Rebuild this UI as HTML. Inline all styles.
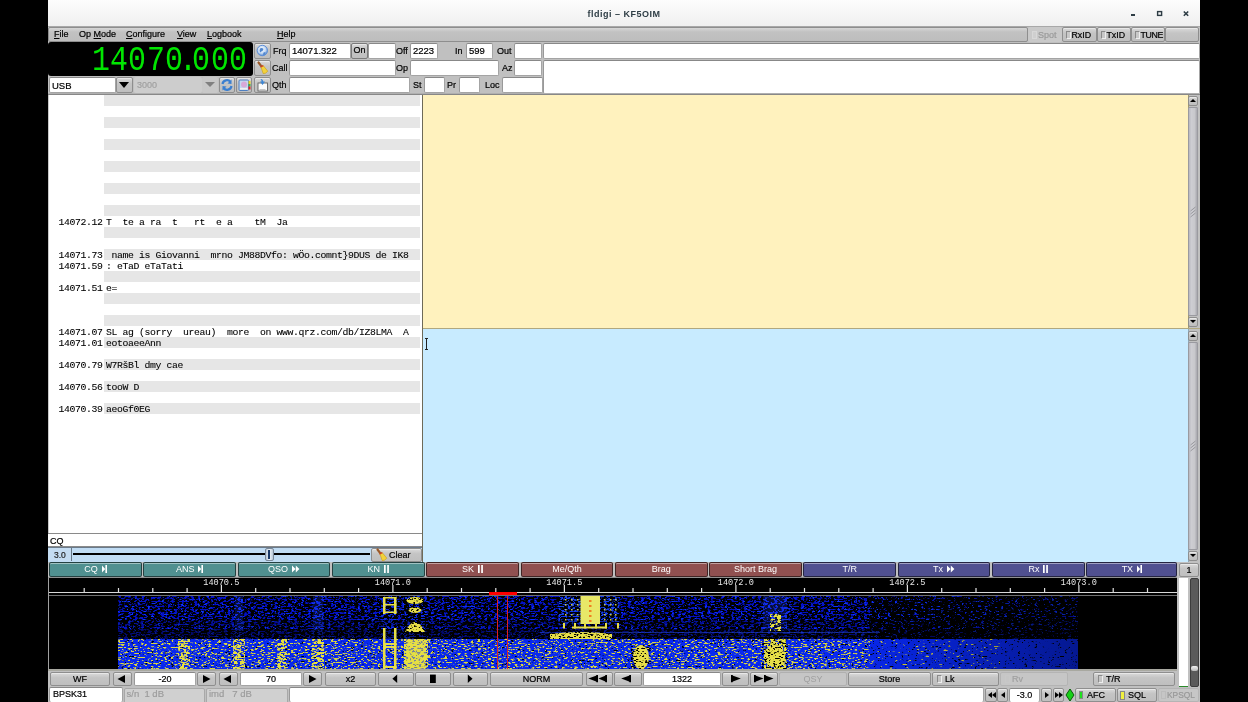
<!DOCTYPE html><html><head><meta charset="utf-8"><style>
*{margin:0;padding:0;box-sizing:border-box}
html,body{width:1248px;height:702px;overflow:hidden;background:#000}
body{will-change:transform;position:relative;font-family:"Liberation Sans",sans-serif;font-size:9px;color:#000}
div{position:absolute}
.btn{border:1px solid #8e8e8e;border-radius:2px;background:linear-gradient(#dadada,#c4c4c4 40%,#bfbfbf);
 box-shadow:inset 0 1px 0 #e8e8e8;text-align:center;white-space:nowrap;line-height:12px;-webkit-text-stroke:0.2px currentColor}
.inp{background:#fff;border:1px solid #a4a4a4;border-top-color:#888;border-left-color:#999;border-radius:2px;white-space:nowrap;line-height:13px;padding-left:2px;-webkit-text-stroke:0.2px currentColor}
.lbl{white-space:nowrap;line-height:10px;-webkit-text-stroke:0.2px currentColor}
.mono{font-family:"Liberation Mono",monospace}
</style></head><body>
<div class="" style="left:48px;top:0px;width:1152px;height:702px;background:#c0c0c0"></div>
<div class="" style="left:48px;top:0px;width:1152px;height:27px;background:linear-gradient(#fdfdfd,#f0f0f0);border-bottom:1px solid #a8a8a8"></div>
<div style="left:48px;top:7.5px;width:1152px;text-align:center;font-size:9px;font-weight:bold;letter-spacing:0.5px;color:#2e3d45;line-height:13px">fldigi – KF5OIM</div>
<svg style="position:absolute;left:1120px;top:0" width="80" height="27"><rect x="11" y="14" width="4" height="2" fill="#2e3d45"/><rect x="37.6" y="11.6" width="4" height="3.8" fill="none" stroke="#2e3d45" stroke-width="1.4"/><path d="M63.8 11.5 L68.2 15.8 M68.2 11.5 L63.8 15.8" stroke="#2e3d45" stroke-width="1.6"/></svg>
<div class="" style="left:48px;top:27px;width:980px;height:15px;background:linear-gradient(#d6d6d6,#c2c2c2 30%,#bdbdbd);border:1px solid #8e8e8e;border-radius:2px"></div>
<div class="lbl" style="left:54px;top:29px;line-height:10px"><u>F</u>ile</div>
<div class="lbl" style="left:79px;top:29px;line-height:10px">Op <u>M</u>ode</div>
<div class="lbl" style="left:126px;top:29px;line-height:10px"><u>C</u>onfigure</div>
<div class="lbl" style="left:177px;top:29px;line-height:10px"><u>V</u>iew</div>
<div class="lbl" style="left:207px;top:29px;line-height:10px"><u>L</u>ogbook</div>
<div class="lbl" style="left:277px;top:29px;line-height:10px"><u>H</u>elp</div>
<div class="" style="left:1028px;top:27px;width:34px;height:15px;background:#c9c9c9;border-radius:2px"></div>
<div style="left:1032px;top:31px;width:5px;height:8px;border:1px solid #d8d8d8;background:#cfcfcf"></div>
<div class="lbl" style="left:1038px;top:29.5px;color:#9a9a9a;font-size:9px">Spot</div>
<div class="btn" style="left:1062px;top:27px;width:35px;height:15px;border-color:#8e8e8e"></div>
<div style="left:1066px;top:31px;width:5px;height:8px;border:1px solid #8a8a8a;border-right-color:#eee;border-bottom-color:#eee;background:#c8c8c8"></div>
<div class="lbl" style="left:1071.5px;top:29.5px;font-size:8.8px">RxID</div>
<div class="btn" style="left:1097px;top:27px;width:34px;height:15px;border-color:#8e8e8e"></div>
<div style="left:1101px;top:31px;width:5px;height:8px;border:1px solid #8a8a8a;border-right-color:#eee;border-bottom-color:#eee;background:#c8c8c8"></div>
<div class="lbl" style="left:1106.5px;top:29.5px;font-size:8.8px">TxID</div>
<div class="btn" style="left:1131px;top:27px;width:34px;height:15px;border-color:#8e8e8e"></div>
<div style="left:1135px;top:31px;width:5px;height:8px;border:1px solid #8a8a8a;border-right-color:#eee;border-bottom-color:#eee;background:#c8c8c8"></div>
<div class="lbl" style="left:1140.5px;top:29.5px;font-size:8.8px;letter-spacing:-0.4px">TUNE</div>
<div class="btn" style="left:1165px;top:27px;width:34px;height:15px;"></div>
<div class="" style="left:48px;top:42px;width:205px;height:34px;background:#000;border-radius:3px"></div>
<div class="mono" style="left:85.5px;top:41px;width:30px;text-align:center;font-size:35.6px;line-height:40px;color:#00e600;transform:scaleX(0.84)">1</div>
<div class="mono" style="left:104.0px;top:41px;width:30px;text-align:center;font-size:35.6px;line-height:40px;color:#00e600;transform:scaleX(0.84)">4</div>
<div class="mono" style="left:122.3px;top:41px;width:30px;text-align:center;font-size:35.6px;line-height:40px;color:#00e600;transform:scaleX(0.84)">0</div>
<div class="mono" style="left:140.6px;top:41px;width:30px;text-align:center;font-size:35.6px;line-height:40px;color:#00e600;transform:scaleX(0.84)">7</div>
<div class="mono" style="left:159.0px;top:41px;width:30px;text-align:center;font-size:35.6px;line-height:40px;color:#00e600;transform:scaleX(0.84)">0</div>
<div class="mono" style="left:172.5px;top:41px;width:30px;text-align:center;font-size:35.6px;line-height:40px;color:#00e600;transform:scaleX(0.84)">.</div>
<div class="mono" style="left:186.4px;top:41px;width:30px;text-align:center;font-size:35.6px;line-height:40px;color:#00e600;transform:scaleX(0.84)">0</div>
<div class="mono" style="left:204.9px;top:41px;width:30px;text-align:center;font-size:35.6px;line-height:40px;color:#00e600;transform:scaleX(0.84)">0</div>
<div class="mono" style="left:223.4px;top:41px;width:30px;text-align:center;font-size:35.6px;line-height:40px;color:#00e600;transform:scaleX(0.84)">0</div>
<div class="btn" style="left:254px;top:43px;width:17px;height:16px;"></div>
<div class="btn" style="left:254px;top:60px;width:17px;height:16px;"></div>
<div class="btn" style="left:254px;top:77px;width:17px;height:16px;"></div>
<svg style="position:absolute;left:254px;top:43px" width="17" height="16"><defs><radialGradient id="gg" cx="0.45" cy="0.4" r="0.6"><stop offset="0" stop-color="#ffffff"/><stop offset="0.6" stop-color="#c8dcf4"/><stop offset="1" stop-color="#5a8ad0"/></radialGradient></defs><circle cx="8.3" cy="7.5" r="5.2" fill="url(#gg)" stroke="#5d8fd8" stroke-width="1"/><path d="M6 5.5 Q8 4.5 9.5 6 L8.5 8 Q7 8 6.5 9.5 Q5 8 6 5.5Z M9.5 9.5 L11.5 9 L11 11.5 L9 12Z" fill="#4f86d0"/></svg>
<svg style="position:absolute;left:254px;top:60px" width="17" height="16"><path d="M4.5 2.5 L7.8 6.8" stroke="#9a5a2a" stroke-width="2.2" stroke-linecap="round"/><path d="M6.8 6.6 L9.2 5.6 L13.8 11.2 Q11.5 14 9.2 13.6 Z" fill="#f2d23c" stroke="#c89c10" stroke-width="0.6"/><path d="M6.5 7 L9.3 5.7" stroke="#d03a2a" stroke-width="1.3"/></svg>
<svg style="position:absolute;left:254px;top:77px" width="17" height="16"><rect x="4" y="6" width="9.5" height="8" fill="#fafafa" stroke="#606060" stroke-width="0.9"/><path d="M6.5 2 Q9 1.5 9.3 4.5 L11 4.5 L8.5 8 L6 4.5 L7.6 4.5 Q7.5 3 6.5 2Z" fill="#3d86d4"/><rect x="5.5" y="12" width="6" height="0.8" fill="#b8b8b8"/></svg>
<div class="lbl" style="left:273px;top:46px;font-size:9px">Frq</div>
<div class="lbl" style="left:272px;top:63px;font-size:9px">Call</div>
<div class="lbl" style="left:272px;top:80px;font-size:9px">Qth</div>
<div class="lbl" style="left:396px;top:46px;font-size:9px">Off</div>
<div class="lbl" style="left:396px;top:63px;font-size:9px">Op</div>
<div class="lbl" style="left:455px;top:46px;font-size:9px">In</div>
<div class="lbl" style="left:497px;top:46px;font-size:9px">Out</div>
<div class="lbl" style="left:502px;top:63px;font-size:9px">Az</div>
<div class="lbl" style="left:413px;top:80px;font-size:9px">St</div>
<div class="lbl" style="left:447px;top:80px;font-size:9px">Pr</div>
<div class="lbl" style="left:485px;top:80px;font-size:9px">Loc</div>
<div class="inp" style="left:289px;top:43px;width:62px;height:16px;"><span style="font-size:9.5px">14071.322</span></div>
<div class="btn" style="left:351px;top:43px;width:17px;height:16px;font-size:9px;line-height:13px;border-color:#7a7a7a">On</div>
<div class="inp" style="left:368px;top:43px;width:28px;height:16px;"></div>
<div class="inp" style="left:410px;top:43px;width:28px;height:16px;"><span style="font-size:9.5px">2223</span></div>
<div class="inp" style="left:466px;top:43px;width:27px;height:16px;"><span style="font-size:9.5px">599</span></div>
<div class="inp" style="left:514px;top:43px;width:28px;height:16px;"></div>
<div class="inp" style="left:543px;top:43px;width:657px;height:16px;"></div>
<div class="inp" style="left:289px;top:60px;width:107px;height:16px;"></div>
<div class="inp" style="left:410px;top:60px;width:89px;height:16px;"></div>
<div class="inp" style="left:514px;top:60px;width:28px;height:16px;"></div>
<div class="inp" style="left:543px;top:60px;width:657px;height:34px;"></div>
<div class="inp" style="left:289px;top:77px;width:121px;height:16px;"></div>
<div class="inp" style="left:424px;top:77px;width:21px;height:16px;"></div>
<div class="inp" style="left:459px;top:77px;width:21px;height:16px;"></div>
<div class="inp" style="left:502px;top:77px;width:41px;height:16px;"></div>
<div class="inp" style="left:49px;top:77px;width:67px;height:16px;line-height:15px"><span style="font-size:9.5px">USB</span></div>
<div class="btn" style="left:116px;top:77px;width:17px;height:16px;"></div>
<div style="left:119px;top:82px;width:0;height:0;border-left:5px solid transparent;border-right:5px solid transparent;border-top:6px solid #000"></div>
<div class="" style="left:134px;top:77px;width:68px;height:16px;background:#cdcdcd;border-radius:2px"></div>
<div class="lbl" style="left:137px;top:80px;color:#a0a0a0;font-size:9px">3000</div>
<div class="" style="left:202px;top:77px;width:16px;height:16px;background:#c8c8c8;border-radius:2px"></div>
<div style="left:205px;top:82px;width:0;height:0;border-left:5px solid transparent;border-right:5px solid transparent;border-top:5px solid #808080"></div>
<div class="btn" style="left:219px;top:77px;width:16px;height:16px;"></div>
<svg style="position:absolute;left:219px;top:77px" width="16" height="16"><path d="M3.5 7 A4.5 4.5 0 0 1 11.5 5" fill="none" stroke="#3b7fd0" stroke-width="2.2"/><path d="M12.5 2.5 L12.5 7 L8.5 6.5Z" fill="#3b7fd0"/><path d="M12.5 9 A4.5 4.5 0 0 1 4.5 11" fill="none" stroke="#3b7fd0" stroke-width="2.2"/><path d="M3.5 13.5 L3.5 9 L7.5 9.5Z" fill="#3b7fd0"/></svg>
<div class="btn" style="left:236px;top:77px;width:16px;height:16px;"></div>
<svg style="position:absolute;left:236px;top:77px" width="16" height="16"><rect x="3" y="3" width="9.5" height="10.5" rx="1" fill="#c4d8f0" stroke="#4e7fc0" stroke-width="1"/><circle cx="8" cy="7.5" r="3" fill="#d8a8d8"/><rect x="4" y="11" width="7.5" height="1.5" fill="#f0f0f0"/><rect x="12.5" y="4" width="2" height="3" fill="#e8d020"/><rect x="12.5" y="7" width="2" height="2.5" fill="#40b040"/><rect x="12.5" y="9.5" width="2" height="3" fill="#e02020"/></svg>
<div class="" style="left:48px;top:93px;width:1152px;height:2px;background:#888;border-top:1px solid #b0b0b0"></div>
<div class="" style="left:48px;top:95px;width:374px;height:438px;background:#fff;border-left:1px solid #c8c8c8"></div>
<div class="" style="left:104px;top:95px;width:316px;height:11px;background:#e6e6e6"></div>
<div class="" style="left:104px;top:117px;width:316px;height:11px;background:#e6e6e6"></div>
<div class="" style="left:104px;top:139px;width:316px;height:11px;background:#e6e6e6"></div>
<div class="" style="left:104px;top:161px;width:316px;height:11px;background:#e6e6e6"></div>
<div class="" style="left:104px;top:183px;width:316px;height:11px;background:#e6e6e6"></div>
<div class="" style="left:104px;top:205px;width:316px;height:11px;background:#e6e6e6"></div>
<div class="" style="left:104px;top:227px;width:316px;height:11px;background:#e6e6e6"></div>
<div class="" style="left:104px;top:249px;width:316px;height:11px;background:#e6e6e6"></div>
<div class="" style="left:104px;top:271px;width:316px;height:11px;background:#e6e6e6"></div>
<div class="" style="left:104px;top:293px;width:316px;height:11px;background:#e6e6e6"></div>
<div class="" style="left:104px;top:315px;width:316px;height:11px;background:#e6e6e6"></div>
<div class="" style="left:104px;top:337px;width:316px;height:11px;background:#e6e6e6"></div>
<div class="" style="left:104px;top:359px;width:316px;height:11px;background:#e6e6e6"></div>
<div class="" style="left:104px;top:381px;width:316px;height:11px;background:#e6e6e6"></div>
<div class="" style="left:104px;top:403px;width:316px;height:11px;background:#e6e6e6"></div>
<div class="mono txt" style="left:58.5px;top:216px">14072.12</div>
<div class="mono txt" style="left:106px;top:216px">T&nbsp;&nbsp;te&nbsp;a&nbsp;ra&nbsp;&nbsp;t&nbsp;&nbsp;&nbsp;rt&nbsp;&nbsp;e&nbsp;a&nbsp;&nbsp;&nbsp;&nbsp;tM&nbsp;&nbsp;Ja</div>
<div class="mono txt" style="left:58.5px;top:249px">14071.73</div>
<div class="mono txt" style="left:106px;top:249px">&nbsp;name&nbsp;is&nbsp;Giovanni&nbsp;&nbsp;mrno&nbsp;JM88DVfo:&nbsp;wÖo.comnt}9DUS&nbsp;de&nbsp;IK8</div>
<div class="mono txt" style="left:58.5px;top:260px">14071.59</div>
<div class="mono txt" style="left:106px;top:260px">:&nbsp;eTaD&nbsp;eTaTati</div>
<div class="mono txt" style="left:58.5px;top:282px">14071.51</div>
<div class="mono txt" style="left:106px;top:282px">e=</div>
<div class="mono txt" style="left:58.5px;top:326px">14071.07</div>
<div class="mono txt" style="left:106px;top:326px">SL&nbsp;ag&nbsp;(sorry&nbsp;&nbsp;ureau)&nbsp;&nbsp;more&nbsp;&nbsp;on&nbsp;www.qrz.com/db/IZ8LMA&nbsp;&nbsp;A</div>
<div class="mono txt" style="left:58.5px;top:337px">14071.01</div>
<div class="mono txt" style="left:106px;top:337px">eotoaeeAnn</div>
<div class="mono txt" style="left:58.5px;top:359px">14070.79</div>
<div class="mono txt" style="left:106px;top:359px">W7RšBl&nbsp;dmy&nbsp;cae</div>
<div class="mono txt" style="left:58.5px;top:381px">14070.56</div>
<div class="mono txt" style="left:106px;top:381px">tooW&nbsp;D</div>
<div class="mono txt" style="left:58.5px;top:403px">14070.39</div>
<div class="mono txt" style="left:106px;top:403px">aeoGf0EG</div>
<style>.txt{font-size:9.8px;letter-spacing:-0.38px;line-height:11px;white-space:pre;color:#000;-webkit-text-stroke:0.08px #000;margin-top:0.5px}</style>
<div class="" style="left:422px;top:95px;width:1px;height:467px;background:#6e6a58"></div>
<div class="" style="left:423px;top:95px;width:765px;height:233px;background:#fff2be"></div>
<div class="" style="left:1188px;top:95px;width:11px;height:233px;background:#c0c0c0;border-left:1px solid #a09870"></div>
<div class="btn" style="left:1188px;top:96px;width:10px;height:10px;"></div>
<div style="left:1190px;top:99px;width:0;height:0;border-left:3px solid transparent;border-right:3px solid transparent;border-bottom:3px solid #000"></div>
<div class="" style="left:1188px;top:107px;width:10px;height:209px;background:linear-gradient(90deg,#b8b8c0,#cdcdd2 30%,#c8c8cc 70%,#a8a8ae);border:1px solid #9a9aa0;border-radius:1px"></div>
<div class="btn" style="left:1188px;top:317px;width:10px;height:10px;"></div>
<div style="left:1190px;top:320px;width:0;height:0;border-left:3px solid transparent;border-right:3px solid transparent;border-top:3px solid #000"></div>
<div class="" style="left:423px;top:328px;width:777px;height:1px;background:#b0a880"></div>
<div class="" style="left:423px;top:329px;width:765px;height:233px;background:#c8ebff"></div>
<div class="" style="left:1188px;top:329px;width:11px;height:233px;background:#c0c0c0;border-left:1px solid #90a8b8"></div>
<div class="btn" style="left:1188px;top:331px;width:10px;height:10px;"></div>
<div style="left:1190px;top:334px;width:0;height:0;border-left:3px solid transparent;border-right:3px solid transparent;border-bottom:3px solid #000"></div>
<div class="" style="left:1188px;top:342px;width:10px;height:208px;background:linear-gradient(90deg,#b8b8c0,#cdcdd2 30%,#c8c8cc 70%,#a8a8ae);border:1px solid #9a9aa0;border-radius:1px"></div>
<div class="btn" style="left:1188px;top:551px;width:10px;height:10px;"></div>
<div style="left:1190px;top:554px;width:0;height:0;border-left:3px solid transparent;border-right:3px solid transparent;border-top:3px solid #000"></div>
<svg style="position:absolute;left:1188px;top:206px" width="10" height="12"><path d="M2.5 5 L7.5 1 M2.5 8 L7.5 4 M2.5 11 L7.5 7" stroke="#8a8a90" stroke-width="0.8"/></svg>
<svg style="position:absolute;left:1188px;top:440px" width="10" height="12"><path d="M2.5 5 L7.5 1 M2.5 8 L7.5 4 M2.5 11 L7.5 7" stroke="#8a8a90" stroke-width="0.8"/></svg>
<div style="left:425px;top:338px;width:3px;height:12px;border-top:1px solid #222;border-bottom:1px solid #222"></div>
<div style="left:426px;top:338px;width:1px;height:12px;background:#222"></div>
<div class="" style="left:48px;top:533px;width:374px;height:14px;background:#fff;border-top:1px solid #8a8a8a;border-bottom:1px solid #8a8a8a"></div>
<div class="lbl" style="left:50px;top:535.5px;font-size:9px">CQ</div>
<div class="" style="left:48px;top:547px;width:374px;height:15px;background:#c0dcf4;border-top:1px solid #6a7a8a"></div>
<div class="" style="left:48px;top:548px;width:24px;height:13px;background:#c4dcf2;border-right:1px solid #687888"></div>
<div class="lbl" style="left:54px;top:550px;font-size:8.5px;color:#222">3.0</div>
<div class="" style="left:73px;top:553px;width:297px;height:2px;background:#000"></div>
<div class="" style="left:265px;top:548px;width:9px;height:13px;background:linear-gradient(90deg,#b8c8d8,#eef4fa,#b8c8d8);border:1px solid #7a8898;border-radius:2px"></div>
<div class="" style="left:268px;top:550px;width:2px;height:9px;background:#1a3a6a"></div>
<div class="btn" style="left:371px;top:548px;width:51px;height:14px;"></div>
<svg style="position:absolute;left:373px;top:547px" width="17" height="16"><path d="M4.5 2.5 L7.8 6.8" stroke="#9a5a2a" stroke-width="2.2" stroke-linecap="round"/><path d="M6.8 6.6 L9.2 5.6 L13.8 11.2 Q11.5 14 9.2 13.6 Z" fill="#f2d23c" stroke="#c89c10" stroke-width="0.6"/><path d="M6.5 7 L9.3 5.7" stroke="#d03a2a" stroke-width="1.3"/></svg>
<div class="lbl" style="left:389px;top:549.5px;font-size:9px">Clear</div>
<div class="" style="left:48px;top:562px;width:1152px;height:16px;background:#c0c0c0"></div>
<div class="mac" style="left:49.0px;top:562px;width:92.8px;height:15px;background:#509090">CQ<svg width="5" height="8" style="vertical-align:-0.5px;margin-left:4px"><path d="M0 0.5L3.2 4L0 7.5Z" fill="#fff"/><rect x="3.4" y="0" width="1.6" height="8" fill="#fff"/></svg></div>
<div class="mac" style="left:143.3px;top:562px;width:92.8px;height:15px;background:#509090">ANS<svg width="5" height="8" style="vertical-align:-0.5px;margin-left:4px"><path d="M0 0.5L3.2 4L0 7.5Z" fill="#fff"/><rect x="3.4" y="0" width="1.6" height="8" fill="#fff"/></svg></div>
<div class="mac" style="left:237.6px;top:562px;width:92.8px;height:15px;background:#509090">QSO<svg width="8" height="8" style="vertical-align:-0.5px;margin-left:4px"><path d="M0 0.5L3.6 4L0 7.5ZM3.8 0.5L7.4 4L3.8 7.5Z" fill="#fff"/></svg></div>
<div class="mac" style="left:331.9px;top:562px;width:92.8px;height:15px;background:#509090">KN<svg width="5" height="8" style="vertical-align:-0.5px;margin-left:4px"><rect x="0" y="0" width="1.7" height="8" fill="#fff"/><rect x="3.2" y="0" width="1.7" height="8" fill="#fff"/></svg></div>
<div class="mac" style="left:426.2px;top:562px;width:92.8px;height:15px;background:#905050">SK<svg width="5" height="8" style="vertical-align:-0.5px;margin-left:4px"><rect x="0" y="0" width="1.7" height="8" fill="#fff"/><rect x="3.2" y="0" width="1.7" height="8" fill="#fff"/></svg></div>
<div class="mac" style="left:520.5px;top:562px;width:92.8px;height:15px;background:#905050">Me/Qth</div>
<div class="mac" style="left:614.8px;top:562px;width:92.8px;height:15px;background:#905050">Brag</div>
<div class="mac" style="left:709.1px;top:562px;width:92.8px;height:15px;background:#905050">Short Brag</div>
<div class="mac" style="left:803.4px;top:562px;width:92.8px;height:15px;background:#505090">T/R</div>
<div class="mac" style="left:897.7px;top:562px;width:92.8px;height:15px;background:#505090">Tx<svg width="8" height="8" style="vertical-align:-0.5px;margin-left:4px"><path d="M0 0.5L3.6 4L0 7.5ZM3.8 0.5L7.4 4L3.8 7.5Z" fill="#fff"/></svg></div>
<div class="mac" style="left:992.0px;top:562px;width:92.8px;height:15px;background:#505090">Rx<svg width="5" height="8" style="vertical-align:-0.5px;margin-left:4px"><rect x="0" y="0" width="1.7" height="8" fill="#fff"/><rect x="3.2" y="0" width="1.7" height="8" fill="#fff"/></svg></div>
<div class="mac" style="left:1086.3px;top:562px;width:91.2px;height:15px;background:#505090">TX<svg width="5" height="8" style="vertical-align:-0.5px;margin-left:4px"><path d="M0 0.5L3.2 4L0 7.5Z" fill="#fff"/><rect x="3.4" y="0" width="1.6" height="8" fill="#fff"/></svg></div>
<style>.mac{border:1px solid rgba(0,0,0,.55);box-shadow:inset 0 1px 0 rgba(255,255,255,.45);border-radius:2px;color:#fff;text-align:center;font-size:9px;line-height:12px;padding-top:0px;white-space:nowrap}</style>
<div class="btn" style="left:1179px;top:563px;width:20px;height:14px;font-size:9px">1</div>
<div class="" style="left:48px;top:577px;width:1130px;height:19px;background:#000;border-top:1px solid #909090;border-left:1px solid #a0a0a0"></div>
<svg style="position:absolute;left:48px;top:577px" width="1130" height="19"><rect x="35.6" y="11" width="1.2" height="4" fill="#e0e0e0"/><rect x="69.9" y="11" width="1.2" height="4" fill="#e0e0e0"/><rect x="104.2" y="11" width="1.2" height="4" fill="#e0e0e0"/><rect x="138.5" y="11" width="1.2" height="4" fill="#e0e0e0"/><rect x="172.8" y="8" width="1.2" height="7" fill="#e0e0e0"/><rect x="207.1" y="11" width="1.2" height="4" fill="#e0e0e0"/><rect x="241.4" y="11" width="1.2" height="4" fill="#e0e0e0"/><rect x="275.7" y="11" width="1.2" height="4" fill="#e0e0e0"/><rect x="310.0" y="11" width="1.2" height="4" fill="#e0e0e0"/><rect x="344.3" y="8" width="1.2" height="7" fill="#e0e0e0"/><rect x="378.6" y="11" width="1.2" height="4" fill="#e0e0e0"/><rect x="412.9" y="11" width="1.2" height="4" fill="#e0e0e0"/><rect x="447.2" y="11" width="1.2" height="4" fill="#e0e0e0"/><rect x="481.5" y="11" width="1.2" height="4" fill="#e0e0e0"/><rect x="515.8" y="8" width="1.2" height="7" fill="#e0e0e0"/><rect x="550.1" y="11" width="1.2" height="4" fill="#e0e0e0"/><rect x="584.4" y="11" width="1.2" height="4" fill="#e0e0e0"/><rect x="618.7" y="11" width="1.2" height="4" fill="#e0e0e0"/><rect x="653.0" y="11" width="1.2" height="4" fill="#e0e0e0"/><rect x="687.3" y="8" width="1.2" height="7" fill="#e0e0e0"/><rect x="721.6" y="11" width="1.2" height="4" fill="#e0e0e0"/><rect x="755.9" y="11" width="1.2" height="4" fill="#e0e0e0"/><rect x="790.2" y="11" width="1.2" height="4" fill="#e0e0e0"/><rect x="824.5" y="11" width="1.2" height="4" fill="#e0e0e0"/><rect x="858.8" y="8" width="1.2" height="7" fill="#e0e0e0"/><rect x="893.1" y="11" width="1.2" height="4" fill="#e0e0e0"/><rect x="927.4" y="11" width="1.2" height="4" fill="#e0e0e0"/><rect x="961.7" y="11" width="1.2" height="4" fill="#e0e0e0"/><rect x="996.0" y="11" width="1.2" height="4" fill="#e0e0e0"/><rect x="1030.3" y="8" width="1.2" height="7" fill="#e0e0e0"/><rect x="1064.6" y="11" width="1.2" height="4" fill="#e0e0e0"/><rect x="1098.9" y="11" width="1.2" height="4" fill="#e0e0e0"/><rect x="1" y="15" width="1129" height="1" fill="#d8d8d8"/><rect x="441" y="15" width="28" height="3" fill="#f00"/><rect x="1" y="18" width="1129" height="1" fill="#707070"/></svg>
<div class="mono" style="left:201.3px;top:579px;width:40px;text-align:center;font-size:8.6px;line-height:9px;color:#e8e8e8">14070.5</div>
<div class="mono" style="left:372.8px;top:579px;width:40px;text-align:center;font-size:8.6px;line-height:9px;color:#e8e8e8">14071.0</div>
<div class="mono" style="left:544.3px;top:579px;width:40px;text-align:center;font-size:8.6px;line-height:9px;color:#e8e8e8">14071.5</div>
<div class="mono" style="left:715.8px;top:579px;width:40px;text-align:center;font-size:8.6px;line-height:9px;color:#e8e8e8">14072.0</div>
<div class="mono" style="left:887.3px;top:579px;width:40px;text-align:center;font-size:8.6px;line-height:9px;color:#e8e8e8">14072.5</div>
<div class="mono" style="left:1058.8px;top:579px;width:40px;text-align:center;font-size:8.6px;line-height:9px;color:#e8e8e8">14073.0</div>
<svg style="position:absolute;left:48px;top:596px" width="1129" height="73"><defs><filter id="kTop" x="0" y="0" width="100%" height="100%" color-interpolation-filters="sRGB"><feTurbulence type="fractalNoise" baseFrequency="0.3 0.6" numOctaves="2" seed="2"/><feColorMatrix type="matrix" values="0 0 0 0 0 0 0 0 0 0 0 0 0 0 0 -10 0 0 0 6.050000000000001"/><feGaussianBlur stdDeviation="0.45"/></filter><filter id="kTopHeavy" x="0" y="0" width="100%" height="100%" color-interpolation-filters="sRGB"><feTurbulence type="fractalNoise" baseFrequency="0.25 0.55" numOctaves="2" seed="2"/><feColorMatrix type="matrix" values="0 0 0 0 0 0 0 0 0 0 0 0 0 0 0 -10 0 0 0 6.3"/></filter><filter id="kBot" x="0" y="0" width="100%" height="100%" color-interpolation-filters="sRGB"><feTurbulence type="fractalNoise" baseFrequency="0.3 0.7" numOctaves="2" seed="4"/><feColorMatrix type="matrix" values="0 0 0 0 0 0 0 0 0 0 0 0 0 0 0 -8 0 0 0 2.98"/></filter><filter id="bTop" x="0" y="0" width="100%" height="100%" color-interpolation-filters="sRGB"><feTurbulence type="fractalNoise" baseFrequency="0.3 0.6" numOctaves="2" seed="5"/><feColorMatrix type="matrix" values="0 0 0 0 0.05 0 0 0 0 0.2 0 0 0 0 1 10 0 0 0 -6.300000000000001"/></filter><filter id="yBot" x="0" y="0" width="100%" height="100%" color-interpolation-filters="sRGB"><feTurbulence type="fractalNoise" baseFrequency="0.3 0.8" numOctaves="2" seed="7"/><feColorMatrix type="matrix" values="0 0 0 0 0.86 0 0 0 0 0.84 0 0 0 0 0.25 10 0 0 0 -5.55"/></filter><filter id="yBotLo" x="0" y="0" width="100%" height="100%" color-interpolation-filters="sRGB"><feTurbulence type="fractalNoise" baseFrequency="0.22 0.7" numOctaves="2" seed="7"/><feColorMatrix type="matrix" values="0 0 0 0 0.86 0 0 0 0 0.84 0 0 0 0 0.25 10 0 0 0 -6.6"/></filter><filter id="kLight" x="0" y="0" width="100%" height="100%" color-interpolation-filters="sRGB"><feTurbulence type="fractalNoise" baseFrequency="0.35 0.8" numOctaves="2" seed="21"/><feColorMatrix type="matrix" values="0 0 0 0 0 0 0 0 0 0 0 0 0 0 0 -10 0 0 0 4.5"/></filter><filter id="yDense" x="0" y="0" width="100%" height="100%" color-interpolation-filters="sRGB"><feTurbulence type="fractalNoise" baseFrequency="0.3 0.6" numOctaves="2" seed="9"/><feColorMatrix type="matrix" values="0 0 0 0 0.9 0 0 0 0 0.88 0 0 0 0 0.25 12 0 0 0 -4.78"/></filter><filter id="yMid" x="0" y="0" width="100%" height="100%" color-interpolation-filters="sRGB"><feTurbulence type="fractalNoise" baseFrequency="0.3 0.6" numOctaves="2" seed="13"/><feColorMatrix type="matrix" values="0 0 0 0 0.9 0 0 0 0 0.88 0 0 0 0 0.25 12 0 0 0 -5.62"/></filter><filter id="yLight" x="0" y="0" width="100%" height="100%" color-interpolation-filters="sRGB"><feTurbulence type="fractalNoise" baseFrequency="0.3 0.6" numOctaves="2" seed="17"/><feColorMatrix type="matrix" values="0 0 0 0 0.9 0 0 0 0 0.88 0 0 0 0 0.25 12 0 0 0 -6.459999999999999"/></filter></defs><rect x="0.0" y="0.0" width="1129.0" height="73.0" fill="#000"/><rect x="0.0" y="0.0" width="1.0" height="73.0" fill="#a0a0a0"/><rect x="70.0" y="0.0" width="960.0" height="43.0" fill="#0410c8"/><rect x="186.0" y="0.0" width="10.0" height="43.0" fill="#1434f0" opacity="0.6"/><rect x="264.0" y="0.0" width="12.0" height="43.0" fill="#1434f0" opacity="0.6"/><rect x="712.0" y="0.0" width="30.0" height="43.0" fill="#1434f0" opacity="0.6"/><rect x="355.0" y="0.0" width="24.0" height="43.0" fill="#1434f0" opacity="0.6"/><rect x="333.0" y="0.0" width="16.0" height="43.0" fill="#1434f0" opacity="0.6"/><rect x="511.0" y="0.0" width="60.0" height="28.0" fill="#1840f0"/><rect x="70.0" y="0.0" width="960.0" height="43.0" filter="url(#kTop)"/><rect x="822.0" y="0.0" width="208.0" height="43.0" filter="url(#kTopHeavy)"/><rect x="912.0" y="0.0" width="118.0" height="43.0" filter="url(#kTopHeavy)"/><rect x="70.0" y="0.0" width="960.0" height="43.0" filter="url(#bTop)"/><rect x="187.0" y="0.0" width="8.0" height="35.0" fill="#2040ff" opacity="0.22"/><rect x="265.0" y="0.0" width="10.0" height="35.0" fill="#2040ff" opacity="0.22"/><rect x="715.0" y="0.0" width="24.0" height="35.0" fill="#2040ff" opacity="0.22"/><rect x="70.0" y="33.0" width="960.0" height="10.0" fill="#000" opacity="0.45"/><rect x="70.0" y="24.0" width="960.0" height="7.0" fill="#000" opacity="0.25"/><ellipse cx="367" cy="4.5" rx="8.5" ry="3.5" fill="#e6de48"/><ellipse cx="367" cy="14" rx="6.5" ry="3" fill="#e6de48"/><path d="M357 36 Q367 16 377 36Z" fill="#e6de48"/><rect x="356.0" y="0.0" width="24.0" height="37.0" filter="url(#kLight)"/><rect x="517.0" y="3.0" width="1.5" height="1.5" fill="#c8c850"/><rect x="517.0" y="8.0" width="1.5" height="1.5" fill="#c8c850"/><rect x="517.0" y="13.0" width="1.5" height="1.5" fill="#c8c850"/><rect x="517.0" y="18.0" width="1.5" height="1.5" fill="#c8c850"/><rect x="517.0" y="23.0" width="1.5" height="1.5" fill="#c8c850"/><rect x="523.0" y="3.0" width="1.5" height="1.5" fill="#c8c850"/><rect x="523.0" y="8.0" width="1.5" height="1.5" fill="#c8c850"/><rect x="523.0" y="13.0" width="1.5" height="1.5" fill="#c8c850"/><rect x="523.0" y="18.0" width="1.5" height="1.5" fill="#c8c850"/><rect x="523.0" y="23.0" width="1.5" height="1.5" fill="#c8c850"/><rect x="529.0" y="3.0" width="1.5" height="1.5" fill="#c8c850"/><rect x="529.0" y="8.0" width="1.5" height="1.5" fill="#c8c850"/><rect x="529.0" y="13.0" width="1.5" height="1.5" fill="#c8c850"/><rect x="529.0" y="18.0" width="1.5" height="1.5" fill="#c8c850"/><rect x="529.0" y="23.0" width="1.5" height="1.5" fill="#c8c850"/><rect x="556.0" y="3.0" width="1.5" height="1.5" fill="#c8c850"/><rect x="556.0" y="8.0" width="1.5" height="1.5" fill="#c8c850"/><rect x="556.0" y="13.0" width="1.5" height="1.5" fill="#c8c850"/><rect x="556.0" y="18.0" width="1.5" height="1.5" fill="#c8c850"/><rect x="556.0" y="23.0" width="1.5" height="1.5" fill="#c8c850"/><rect x="562.0" y="3.0" width="1.5" height="1.5" fill="#c8c850"/><rect x="562.0" y="8.0" width="1.5" height="1.5" fill="#c8c850"/><rect x="562.0" y="13.0" width="1.5" height="1.5" fill="#c8c850"/><rect x="562.0" y="18.0" width="1.5" height="1.5" fill="#c8c850"/><rect x="562.0" y="23.0" width="1.5" height="1.5" fill="#c8c850"/><rect x="567.0" y="3.0" width="1.5" height="1.5" fill="#c8c850"/><rect x="567.0" y="8.0" width="1.5" height="1.5" fill="#c8c850"/><rect x="567.0" y="13.0" width="1.5" height="1.5" fill="#c8c850"/><rect x="567.0" y="18.0" width="1.5" height="1.5" fill="#c8c850"/><rect x="567.0" y="23.0" width="1.5" height="1.5" fill="#c8c850"/><rect x="532.5" y="0.0" width="19.5" height="28.0" fill="#e8e868"/><rect x="541.0" y="4.0" width="2.5" height="2.0" fill="#f08020"/><rect x="541.0" y="9.0" width="2.5" height="2.0" fill="#f08020"/><rect x="541.0" y="14.0" width="2.5" height="2.0" fill="#f08020"/><rect x="541.0" y="19.0" width="2.5" height="2.0" fill="#f08020"/><rect x="541.0" y="24.0" width="2.5" height="2.0" fill="#f08020"/><rect x="524.0" y="30.5" width="35.0" height="2.0" fill="#e6de48"/><rect x="515.0" y="27.0" width="2.0" height="5.5" fill="#e6de48"/><rect x="526.0" y="27.0" width="2.0" height="5.5" fill="#e6de48"/><rect x="536.0" y="27.0" width="2.0" height="5.5" fill="#e6de48"/><rect x="547.0" y="27.0" width="2.0" height="5.5" fill="#e6de48"/><rect x="557.0" y="27.0" width="2.0" height="5.5" fill="#e6de48"/><rect x="569.0" y="27.0" width="2.0" height="5.5" fill="#e6de48"/><rect x="492.0" y="36.0" width="340.0" height="1.0" fill="#2850ff" opacity="0.5"/><path d="M502 38 Q532 34 564 38 L564 44 Q532 47 502 43Z" fill="#e6de48"/><rect x="500.0" y="34.0" width="66.0" height="11.0" filter="url(#kLight)"/><rect x="722.0" y="18.0" width="11.0" height="17.0" filter="url(#yMid)"/><rect x="335.0" y="1.0" width="2.5" height="17.0" fill="#e6de48"/><rect x="335.0" y="32.0" width="2.5" height="11.0" fill="#e6de48"/><rect x="346.0" y="1.0" width="2.5" height="17.0" fill="#e6de48"/><rect x="346.0" y="32.0" width="2.5" height="11.0" fill="#e6de48"/><rect x="335.0" y="1.0" width="13.5" height="1.5" fill="#e6de48"/><rect x="335.0" y="8.0" width="13.5" height="1.5" fill="#e6de48"/><rect x="335.0" y="15.5" width="13.5" height="1.5" fill="#e6de48"/><rect x="70.0" y="43.0" width="960.0" height="30.0" fill="#0828f0"/><rect x="70.0" y="43.0" width="960.0" height="30.0" filter="url(#kBot)"/><rect x="70.0" y="43.0" width="752.0" height="30.0" filter="url(#yBot)"/><rect x="822.0" y="43.0" width="130.0" height="30.0" filter="url(#yBotLo)"/><defs><linearGradient id="gdk" x1="0" x2="1" y1="0" y2="0"><stop offset="0" stop-color="#000" stop-opacity="0"/><stop offset="1" stop-color="#000" stop-opacity="0.4"/></linearGradient></defs><rect x="802.0" y="43.0" width="228.0" height="30.0" fill="url(#gdk)"/><rect x="802.0" y="0.0" width="228.0" height="43.0" fill="url(#gdk)"/><rect x="130.5" y="43.0" width="11.0" height="30.0" filter="url(#yMid)"/><rect x="185.5" y="43.0" width="11.0" height="30.0" filter="url(#yMid)"/><rect x="229.0" y="43.0" width="10.0" height="30.0" filter="url(#yMid)"/><rect x="264.0" y="43.0" width="12.0" height="30.0" filter="url(#yMid)"/><ellipse cx="593" cy="61" rx="8" ry="12" fill="#e6de48"/><rect x="583.0" y="49.0" width="20.0" height="24.0" filter="url(#kLight)"/><rect x="716.0" y="43.0" width="22.0" height="30.0" filter="url(#yDense)"/><ellipse cx="727" cy="60" rx="10" ry="11" fill="#e6de48"/><rect x="714.0" y="43.0" width="26.0" height="30.0" filter="url(#kLight)"/><rect x="335.0" y="43.0" width="2.5" height="30.0" fill="#e6de48"/><rect x="346.0" y="43.0" width="2.5" height="30.0" fill="#e6de48"/><rect x="335.0" y="47.0" width="13.5" height="2.0" fill="#e6de48"/><rect x="335.0" y="50.0" width="13.5" height="2.0" fill="#e6de48"/><rect x="335.0" y="70.0" width="13.5" height="2.0" fill="#e6de48"/><rect x="356.0" y="43.0" width="24.0" height="30.0" filter="url(#yDense)"/><rect x="358.0" y="43.0" width="20.0" height="30.0" fill="#e6de48" opacity="0.5"/><rect x="449.0" y="0.0" width="1.0" height="73.0" fill="#e02020"/><rect x="459.0" y="0.0" width="1.0" height="73.0" fill="#e02020"/></svg>
<div class="" style="left:1177px;top:577px;width:2px;height:110px;background:#c0c0c0"></div>
<div class="" style="left:1179px;top:578px;width:9px;height:109px;background:#fff;border-bottom:1px solid #2a8a2a"></div>
<div class="" style="left:1190px;top:578px;width:9px;height:109px;background:#5a5a5a;border:1px solid #3c3c3c;border-radius:2px"></div>
<div class="" style="left:1191px;top:666px;width:7px;height:5px;background:linear-gradient(#f0f0f0,#b8b8b8);border-radius:2px"></div>
<div class="" style="left:48px;top:669px;width:1129px;height:2px;background:#a8a8a0"></div>
<div class="btn" style="left:50px;top:672px;width:60px;height:14px;font-size:9px">WF</div>
<div class="btn" style="left:113px;top:672px;width:19px;height:14px;"></div>
<div class="inp" style="left:134px;top:672px;width:62px;height:14px;text-align:center;font-size:9px;line-height:12px;padding:0">-20</div>
<div class="btn" style="left:197px;top:672px;width:19px;height:14px;"></div>
<div class="btn" style="left:219px;top:672px;width:19px;height:14px;"></div>
<div class="inp" style="left:240px;top:672px;width:62px;height:14px;text-align:center;font-size:9px;line-height:12px;padding:0">70</div>
<div class="btn" style="left:303px;top:672px;width:19px;height:14px;"></div>
<div class="btn" style="left:325px;top:672px;width:51px;height:14px;font-size:9px">x2</div>
<div class="btn" style="left:378px;top:672px;width:36px;height:14px;"></div>
<div class="btn" style="left:415px;top:672px;width:36px;height:14px;"></div>
<div class="btn" style="left:453px;top:672px;width:35px;height:14px;"></div>
<div class="btn" style="left:490px;top:672px;width:93px;height:14px;font-size:9px">NORM</div>
<div class="btn" style="left:586px;top:672px;width:27px;height:14px;"></div>
<div class="btn" style="left:614px;top:672px;width:28px;height:14px;"></div>
<div class="inp" style="left:643px;top:672px;width:78px;height:14px;text-align:center;font-size:9px;line-height:12px;padding:0">1322</div>
<div class="btn" style="left:722px;top:672px;width:27px;height:14px;"></div>
<div class="btn" style="left:750px;top:672px;width:28px;height:14px;"></div>
<svg style="position:absolute;left:0;top:0" width="1248" height="702"><polygon points="125,675 125,683 117.5,679.0" fill="#000"/><polygon points="203,675 203,683 210.5,679.0" fill="#000"/><polygon points="231,675 231,683 223.5,679.0" fill="#000"/><polygon points="309,675 309,683 316.5,679.0" fill="#000"/><polygon points="397.2,674.6 397.2,683 392.4,678.8" fill="#000"/><rect x="430" y="674.6" width="5.8" height="8.4" fill="#000"/><polygon points="467.8,674.6 467.8,683 472.5,678.8" fill="#000"/><polygon points="598,675 598,682.2 588.4,678.6" fill="#000"/><polygon points="607,675 607,682.2 598.5,678.6" fill="#000"/><rect x="596.3" y="675" width="1.7" height="7.2" fill="#000"/><rect x="605.3" y="675" width="1.7" height="7.2" fill="#000"/><polygon points="631,675 631,682.2 621.2,678.6" fill="#000"/><rect x="629.3" y="675" width="1.7" height="7.2" fill="#000"/><polygon points="731,675 731,682.2 740.8,678.6" fill="#000"/><rect x="731" y="675" width="1.7" height="7.2" fill="#000"/><polygon points="754,675 754,682.2 763.5,678.6" fill="#000"/><polygon points="764,675 764,682.2 773.5,678.6" fill="#000"/><rect x="754" y="675" width="1.7" height="7.2" fill="#000"/><rect x="764" y="675" width="1.7" height="7.2" fill="#000"/></svg>
<div class="" style="left:779px;top:672px;width:68px;height:14px;background:#c6c6c6;border:1px solid #b0b0b0;border-radius:2px;text-align:center;color:#a0a0a0;font-size:9px;line-height:12px">QSY</div>
<div class="btn" style="left:848px;top:672px;width:83px;height:14px;font-size:9px">Store</div>
<div class="btn" style="left:932px;top:672px;width:67px;height:14px;text-align:left"></div>
<div style="left:937px;top:675px;width:5px;height:8px;border:1px solid #8a8a8a;border-right-color:#eee;border-bottom-color:#eee"></div>
<div class="lbl" style="left:945px;top:674px;font-size:9px">Lk</div>
<div class="" style="left:1000px;top:672px;width:68px;height:14px;background:#c6c6c6;border:1px solid #b4b4b4;border-radius:2px"></div>
<div style="left:1005px;top:675px;width:5px;height:8px;border:1px solid #c8c8c8"></div>
<div class="lbl" style="left:1012px;top:674px;font-size:9px;color:#a0a0a0">Rv</div>
<div class="btn" style="left:1093px;top:672px;width:82px;height:14px;"></div>
<div style="left:1098px;top:675px;width:5px;height:8px;border:1px solid #8a8a8a;border-right-color:#eee;border-bottom-color:#eee"></div>
<div class="lbl" style="left:1106px;top:674px;font-size:9px">T/R</div>
<div class="inp" style="left:49px;top:687px;width:74px;height:15px;font-size:9px;line-height:13px;padding-left:3px;border-bottom:none">BPSK31</div>
<div class="" style="left:124px;top:688px;width:81px;height:16px;background:#d0d0d0;border:1px solid #a8a8a8;border-radius:2px"></div>
<div class="lbl" style="left:126.5px;top:689px;font-size:9.5px;color:#9c9c9c">s/n&nbsp;&nbsp;1 dB</div>
<div class="" style="left:206px;top:688px;width:82px;height:16px;background:#d0d0d0;border:1px solid #a8a8a8;border-radius:2px"></div>
<div class="lbl" style="left:209px;top:689px;font-size:9.5px;color:#9c9c9c">imd&nbsp;&nbsp;&nbsp;7 dB</div>
<div class="inp" style="left:289px;top:687px;width:695px;height:15px;border-bottom:none"></div>
<div class="btn" style="left:985px;top:688px;width:12px;height:14px;"></div>
<div style="left:987.5px;top:692.0px;width:0;height:0;border-top:3px solid transparent;border-bottom:3px solid transparent;border-right:4px solid #000"></div>
<div style="left:991.5px;top:692.0px;width:0;height:0;border-top:3px solid transparent;border-bottom:3px solid transparent;border-right:4px solid #000"></div>
<div class="btn" style="left:997px;top:688px;width:11px;height:14px;"></div>
<div style="left:1000.5px;top:692.0px;width:0;height:0;border-top:3px solid transparent;border-bottom:3px solid transparent;border-right:4px solid #000"></div>
<div class="inp" style="left:1009px;top:688px;width:31px;height:14px;text-align:center;font-size:9px;line-height:12px;padding:0;border-bottom:none">-3.0</div>
<div class="btn" style="left:1041px;top:688px;width:11px;height:14px;"></div>
<div style="left:1044.5px;top:692.0px;width:0;height:0;border-top:3px solid transparent;border-bottom:3px solid transparent;border-left:4px solid #000"></div>
<div class="btn" style="left:1053px;top:688px;width:11px;height:14px;"></div>
<div style="left:1054.5px;top:692.0px;width:0;height:0;border-top:3px solid transparent;border-bottom:3px solid transparent;border-left:4px solid #000"></div>
<div style="left:1058.5px;top:692.0px;width:0;height:0;border-top:3px solid transparent;border-bottom:3px solid transparent;border-left:4px solid #000"></div>
<svg style="position:absolute;left:1065px;top:688px" width="10" height="14"><path d="M5 1 L9 7 L5 13 L1 7Z" fill="#18d018" stroke="#0a5a0a" stroke-width="1"/></svg>
<div class="btn" style="left:1075px;top:688px;width:41px;height:14px;"></div>
<div class="" style="left:1079px;top:691px;width:4px;height:8px;background:#20e020;border:1px solid #888"></div>
<div class="lbl" style="left:1087px;top:690px;font-size:9px">AFC</div>
<div class="btn" style="left:1117px;top:688px;width:40px;height:14px;"></div>
<div class="" style="left:1120px;top:691px;width:5px;height:9px;background:#f0f040;border:1px solid #888"></div>
<div class="lbl" style="left:1128px;top:690px;font-size:9px">SQL</div>
<div class="" style="left:1158px;top:688px;width:41px;height:14px;background:#c6c6c6;border:1px solid #b4b4b4;border-radius:2px"></div>
<div style="left:1161px;top:691px;width:5px;height:8px;border:1px solid #bcbcbc"></div>
<div class="lbl" style="left:1167px;top:690px;font-size:8.4px;color:#989898">KPSQL</div>
</body></html>
